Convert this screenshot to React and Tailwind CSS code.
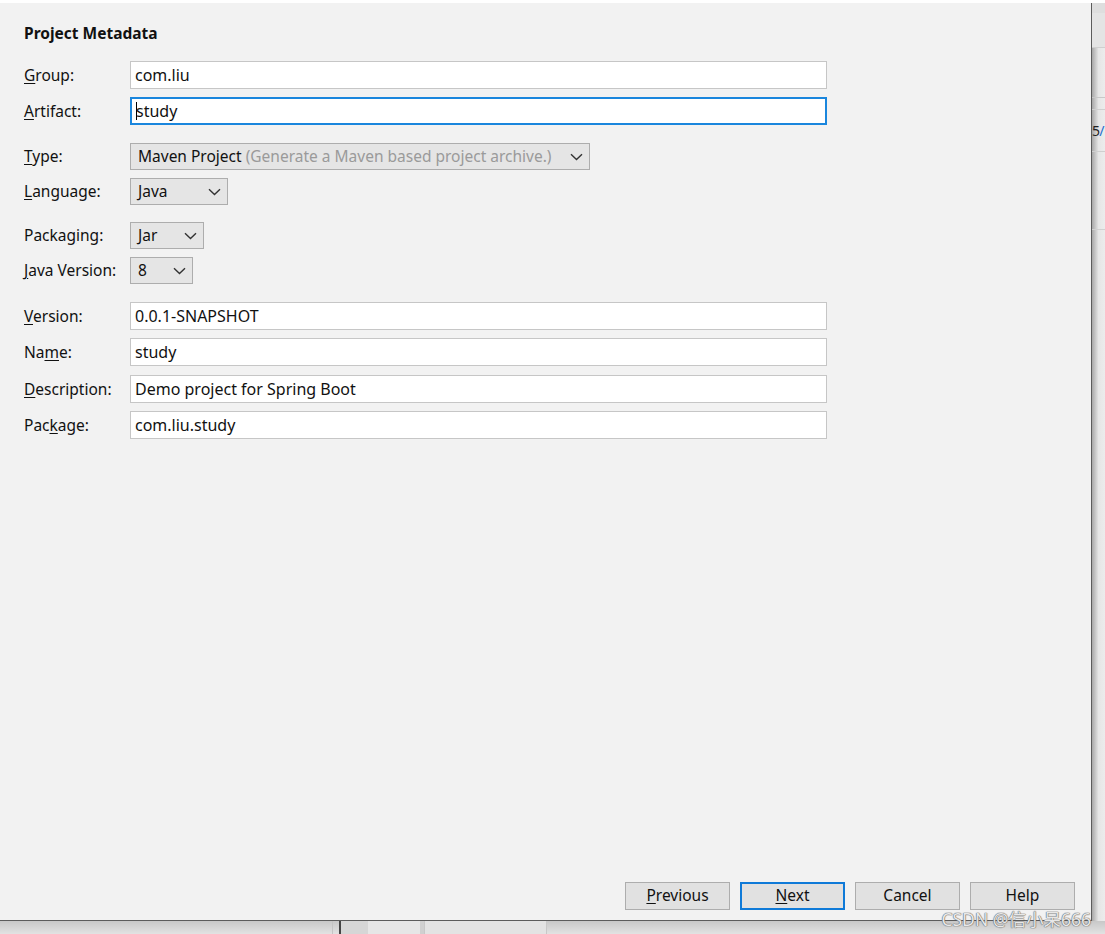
import React from "react";

const font = { fontFamily: '"Noto Sans", "Noto Sans CJK SC", sans-serif' };

const Mn = ({ children }) => <span className="underline underline-offset-2">{children}</span>;

const Chevron = () => (
  <svg width="13" height="8" viewBox="0 0 13 8" className="shrink-0">
    <path d="M1 1.2 L6.5 6.5 L12 1.2" fill="none" stroke="#333" strokeWidth="1.4" />
  </svg>
);

const TextField = ({ value, focused }) => (
  <div
    className={`flex h-[28px] w-[697px] items-center bg-white ${
      focused ? "border-2 border-[#1a86dd] pl-[4px]" : "border border-[#c6c6c6] pl-[4px]"
    }`}
  >
    {focused && <span className="mr-[-1px] h-[18px] w-px bg-black" />}
    <span className="text-[16px] text-[#111]">{value}</span>
  </div>
);

const Select = ({ width, children }) => (
  <div
    className="flex h-[27px] items-center justify-between border border-[#adadad] bg-[#e5e5e5] pl-[7px] pr-[6px]"
    style={{ width }}
  >
    <span className="text-[15.5px] text-[#111] whitespace-nowrap">{children}</span>
    <Chevron />
  </div>
);

const Row = ({ label, className = "", children }) => (
  <div className={`flex items-center ${className}`}>
    <div className="w-[106px] text-[15.5px] text-[#111]">{label}</div>
    {children}
  </div>
);

const Btn = ({ children, primary }) => (
  <div
    className={`flex h-[28px] w-[105px] items-center justify-center bg-[#e1e1e1] text-[15.5px] text-[#111] ${
      primary ? "border-2 border-[#0f7ad8]" : "border border-[#adadad]"
    }`}
  >
    {children}
  </div>
);

export default function App() {
  return (
    <div className="relative h-[934px] w-[1105px] overflow-hidden bg-[#dcdcdc]" style={font}>
      <div className="h-[3px] bg-white" />
      <div className="flex h-[918px]">
        <div className="flex w-[1092px] shrink-0 flex-col border-r border-b border-[#5c5c5c] bg-[#f2f2f2] pl-6">
          <div className="mt-[19px] text-[15.5px] font-bold text-[#111]">Project Metadata</div>

          <Row label={<><Mn>G</Mn>roup:</>} className="mt-[16px]">
            <TextField value="com.liu" />
          </Row>
          <Row label={<><Mn>A</Mn>rtifact:</>} className="mt-[8px]">
            <TextField value="study" focused />
          </Row>

          <Row label={<><Mn>T</Mn>ype:</>} className="mt-[18px]">
            <Select width={460}>
              Maven Project <span className="text-[#9a9a9a]">(Generate a Maven based project archive.)</span>
            </Select>
          </Row>
          <Row label={<><Mn>L</Mn>anguage:</>} className="mt-[8px]">
            <Select width={98}>Java</Select>
          </Row>

          <Row label={<>Packa<Mn>g</Mn>ing:</>} className="mt-[17px]">
            <Select width={74}>Jar</Select>
          </Row>
          <Row label={<><Mn>J</Mn>ava Version:</>} className="mt-[8px]">
            <Select width={63}>8</Select>
          </Row>

          <Row label={<><Mn>V</Mn>ersion:</>} className="mt-[18px]">
            <TextField value="0.0.1-SNAPSHOT" />
          </Row>
          <Row label={<>Na<Mn>m</Mn>e:</>} className="mt-[8px]">
            <TextField value="study" />
          </Row>
          <Row label={<><Mn>D</Mn>escription:</>} className="mt-[9px]">
            <TextField value="Demo project for Spring Boot" />
          </Row>
          <Row label={<>Pac<Mn>k</Mn>age:</>} className="mt-[8px]">
            <TextField value="com.liu.study" />
          </Row>

          <div className="mt-auto mb-[10px] flex justify-end gap-[10px] pr-[16px]">
            <Btn><Mn>P</Mn>revious</Btn>
            <Btn primary><Mn>N</Mn>ext</Btn>
            <Btn>Cancel</Btn>
            <Btn>Help</Btn>
          </div>
        </div>

        <div className="flex min-w-0 flex-1 flex-col overflow-hidden bg-gradient-to-r from-[#a8a8a8] via-[#e6e6e6] to-[#ececec]">
          <div className="h-[10px] bg-[#dedede]" />
          <div className="h-[35px] border-b border-[#cfcfcf] bg-[#e4e4e4]" />
          <div className="h-[50px] border-b border-[#c8c8c8]" />
          <div className="h-[12px] border-b border-[#cfcfcf]" />
          <div className="flex h-[42px] items-center border-b border-[#cfcfcf]">
            <span className="text-[14px] leading-none tracking-tighter text-[#222]">5<span className="text-[#1e6fd0]">/</span></span>
          </div>
          <div className="h-[78px] border-b border-[#d0d0d0]" />
        </div>
      </div>

      <div className="flex h-[13px] bg-gradient-to-b from-[#c8c8c8] to-[#e2e2e2]">
        <div className="w-[333px] border-r border-[#c4c4c4]" />
        <div className="w-[8px] border-r-2 border-[#444]" />
        <div className="w-[27px] bg-[#d6d6d6]" />
        <div className="w-[52px] bg-[#e6e6e6]" />
        <div className="w-[4px] bg-[#d0d0d0]" />
        <div className="w-[123px] border-l border-r border-[#c8c8c8] bg-[#e3e3e3]" />
        <div className="flex-1" />
      </div>

      <div className="absolute right-[14px] bottom-[6px] text-[17.5px] leading-none text-white/85 [text-shadow:0_0_1px_#666,0_0_1px_#666,0_0_1px_#666]">
        CSDN @信小呆666
      </div>
    </div>
  );
}
